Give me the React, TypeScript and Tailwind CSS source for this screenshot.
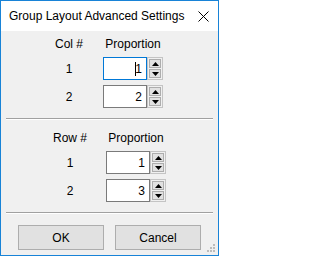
import React from "react";

const font = { fontFamily: '"Liberation Sans", Arial, sans-serif' };

function Spin({ value, focused }: { value: string; focused?: boolean }) {
  return (
    <div className="flex h-[23px]">
      <div
        className={`relative flex h-full w-[44px] items-center justify-end bg-white pr-[4px] text-[12px] text-black border ${
          focused ? "border-[#0078d7]" : "border-[#7a7a7a]"
        }`}
      >
        {focused && <span className="absolute left-[31px] top-[4px] h-[14px] w-px bg-black" />}
        <span>{value}</span>
      </div>
      <div className="flex w-[16px] flex-col border border-[#c4c4c4] bg-[#f0f0f0] p-px gap-px">
        <div className="flex flex-1 items-center justify-center border border-[#adadad] bg-[#e1e1e1]">
          <svg width="7" height="4" viewBox="0 0 7 4">
            <path d="M0 4 L3.5 0 L7 4 Z" fill="#000" />
          </svg>
        </div>
        <div className="flex flex-1 items-center justify-center border border-[#adadad] bg-[#e1e1e1]">
          <svg width="7" height="4" viewBox="0 0 7 4">
            <path d="M0 0 L7 0 L3.5 4 Z" fill="#000" />
          </svg>
        </div>
      </div>
    </div>
  );
}

function Section({
  label,
  values,
  focusFirst,
  pl,
  gapX,
}: {
  label: string;
  values: string[];
  focusFirst?: boolean;
  pl: string;
  gapX: string;
}) {
  return (
    <div className={`flex flex-col gap-[5px] ${pl}`}>
      <div className="flex h-[16px] items-center leading-[16px]">
        <div className="w-[40px] text-center">{label}</div>
        <div className={`w-[60px] text-center ${gapX}`}>Proportion</div>
      </div>
      {values.map((v, i) => (
        <div key={i} className="flex items-center">
          <div className="w-[40px] text-center">{i + 1}</div>
          <div className={gapX}>
            <Spin value={v} focused={focusFirst && i === 0} />
          </div>
        </div>
      ))}
    </div>
  );
}

function Separator() {
  return (
    <div className="mx-[5px] flex flex-col">
      <div className="h-px bg-[#a0a0a0]" />
      <div className="h-px bg-white" />
    </div>
  );
}

export default function App() {
  return (
    <div
      style={font}
      className="relative flex h-[256px] w-[219px] flex-col border border-[#1883d7] bg-[#f0f0f0] text-[12px] text-black"
    >
      <div className="flex h-[30px] items-center justify-between bg-white pl-[8px] pr-[9px]">
        <span className="text-[12px]">Group Layout Advanced Settings</span>
        <svg width="11" height="11" viewBox="0 0 11 11">
          <path d="M0.5 0.5 L10.5 10.5 M10.5 0.5 L0.5 10.5" stroke="#000" strokeWidth="1" />
        </svg>
      </div>

      <div className="pt-[5px]">
        <Section label="Col #" values={["1", "2"]} focusFirst pl="pl-[48px]" gapX="ml-[14px]" />
      </div>

      <div className="mt-[10px]">
        <Separator />
      </div>

      <div className="pt-[10px]">
        <Section label="Row #" values={["1", "3"]} pl="pl-[49px]" gapX="ml-[16px]" />
      </div>

      <div className="mt-[10px]">
        <Separator />
      </div>

      <div className="mt-[11px] flex gap-[11px] pl-[17px]">
        <button className="h-[25px] w-[86px] border border-[#adadad] bg-[#e1e1e1] text-[12px]">OK</button>
        <button className="h-[25px] w-[86px] border border-[#adadad] bg-[#e1e1e1] text-[12px]">Cancel</button>
      </div>

      <svg className="absolute bottom-[2px] right-[2px]" width="9" height="9" viewBox="0 0 9 9">
        <rect x="6" y="0" width="2" height="2" fill="#bcbcbc" />
        <rect x="3" y="3" width="2" height="2" fill="#bcbcbc" />
        <rect x="6" y="3" width="2" height="2" fill="#bcbcbc" />
        <rect x="0" y="6" width="2" height="2" fill="#bcbcbc" />
        <rect x="3" y="6" width="2" height="2" fill="#bcbcbc" />
        <rect x="6" y="6" width="2" height="2" fill="#bcbcbc" />
      </svg>
    </div>
  );
}
